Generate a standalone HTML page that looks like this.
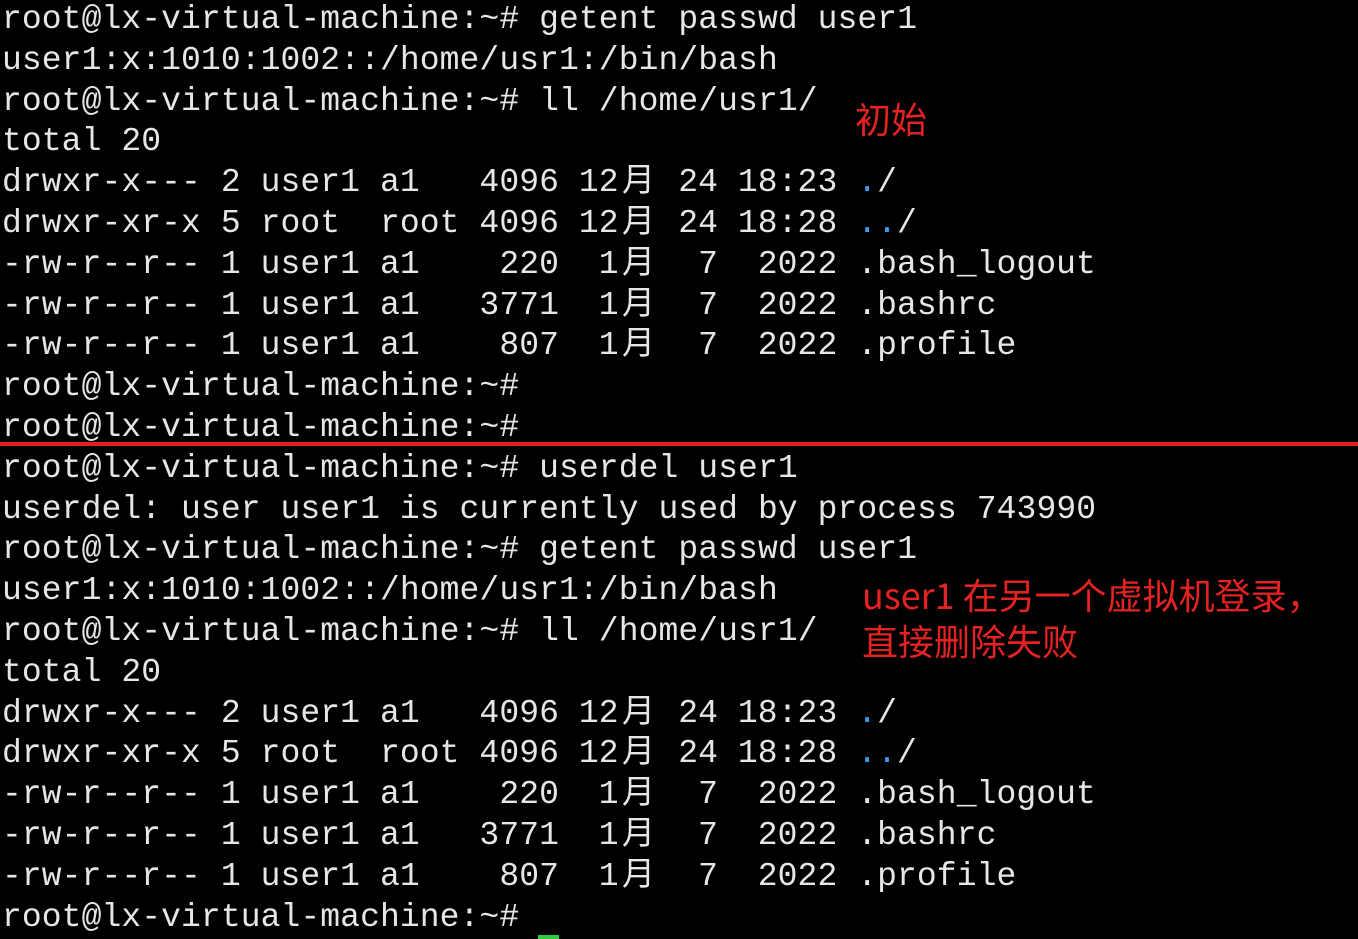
<!DOCTYPE html>
<html><head><meta charset="utf-8"><style>
html,body{margin:0;padding:0;background:#000;width:1358px;height:939px;overflow:hidden}
pre{margin:0;position:absolute;left:2px;top:0px;font-family:"Liberation Mono","Noto Sans CJK SC",monospace;font-size:33px;letter-spacing:0.09px;line-height:40.8px;color:#e6e6e6;white-space:pre}
.w{display:inline-block;width:2ch;text-align:center}
.b{color:#3b9cf0}
.red{position:absolute;left:0;top:442px;width:1358px;height:4px;background:#e81e1e}
.cur{position:absolute;left:538px;top:935px;width:21px;height:4px;background:#2ecc40}
.a{position:absolute;font-family:"Noto Sans CJK SC","Liberation Sans",sans-serif;font-size:36px;color:#e52222;line-height:46px;white-space:nowrap}
</style></head><body>
<pre>root@lx-virtual-machine:~# getent passwd user1
user1:x:1010:1002::/home/usr1:/bin/bash
root@lx-virtual-machine:~# ll /home/usr1/
total 20
drwxr-x--- 2 user1 a1   4096 12<span class="w">月</span> 24 18:23 <span class="b">.</span>/
drwxr-xr-x 5 root  root 4096 12<span class="w">月</span> 24 18:28 <span class="b">..</span>/
-rw-r--r-- 1 user1 a1    220  1<span class="w">月</span>  7  2022 .bash_logout
-rw-r--r-- 1 user1 a1   3771  1<span class="w">月</span>  7  2022 .bashrc
-rw-r--r-- 1 user1 a1    807  1<span class="w">月</span>  7  2022 .profile
root@lx-virtual-machine:~#
root@lx-virtual-machine:~#
root@lx-virtual-machine:~# userdel user1
userdel: user user1 is currently used by process 743990
root@lx-virtual-machine:~# getent passwd user1
user1:x:1010:1002::/home/usr1:/bin/bash
root@lx-virtual-machine:~# ll /home/usr1/
total 20
drwxr-x--- 2 user1 a1   4096 12<span class="w">月</span> 24 18:23 <span class="b">.</span>/
drwxr-xr-x 5 root  root 4096 12<span class="w">月</span> 24 18:28 <span class="b">..</span>/
-rw-r--r-- 1 user1 a1    220  1<span class="w">月</span>  7  2022 .bash_logout
-rw-r--r-- 1 user1 a1   3771  1<span class="w">月</span>  7  2022 .bashrc
-rw-r--r-- 1 user1 a1    807  1<span class="w">月</span>  7  2022 .profile
root@lx-virtual-machine:~#</pre>
<div class="red"></div>
<div class="cur"></div>
<div class="a" style="left:855px;top:95px">初始</div>
<div class="a" style="left:862px;top:571px">user1 在另一个虚拟机登录，</div>
<div class="a" style="left:862px;top:617px">直接删除失败</div>
</body></html>
